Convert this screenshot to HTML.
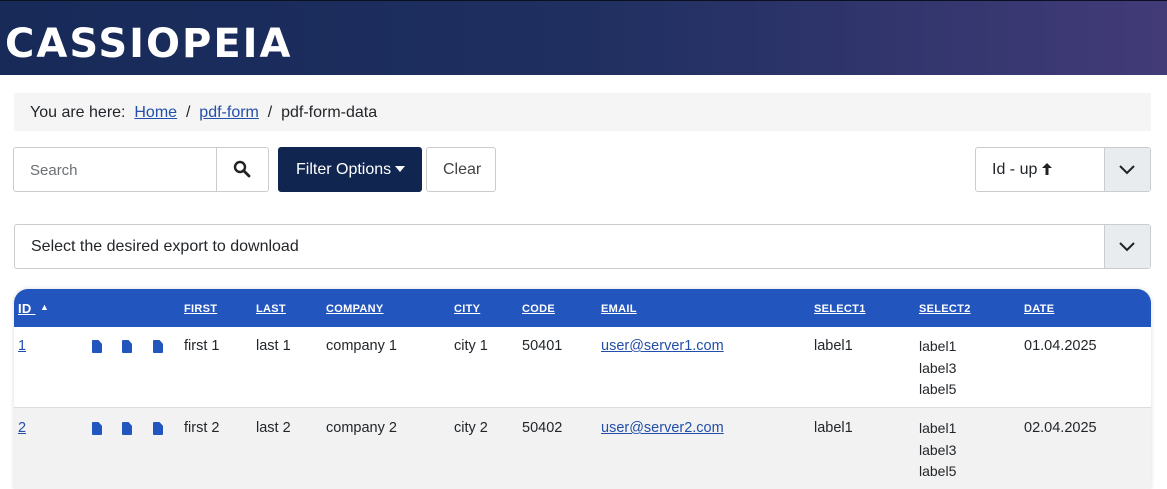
<!DOCTYPE html>
<html><head><style>
*{box-sizing:border-box;margin:0;padding:0}
body{width:1167px;height:485px;overflow:hidden;background:#fff;font-family:"Liberation Sans",sans-serif;color:#22262a;position:relative}
.hdr{position:absolute;left:0;top:0;width:1167px;height:75px;background:linear-gradient(90deg,#172a58 0%,#1f2f60 50%,#423b78 100%);border-top:1px solid #0b1020}
.logo{position:absolute;left:5px;top:20px;color:#fff;font-size:40px;font-weight:bold;letter-spacing:2px;font-family:"DejaVu Sans","Liberation Sans",sans-serif}
.bc{position:absolute;left:14px;top:93px;width:1137px;height:38px;background:#f5f5f5;font-size:16px;padding:11px 16px;color:#22262a}
.bc a{color:#224faa;text-decoration:underline}
.box{position:absolute;border:1px solid #ccc;background:#fff;border-radius:3px;font-size:16px;white-space:nowrap}
.tbl{position:absolute;left:14px;top:289px;width:1137px;height:200px;border-radius:14px 14px 0 0;overflow:hidden;box-shadow:0 0 4px rgba(0,0,0,.15)}
.th{height:38px;background:#2355be}
.th span{position:absolute;top:14px;color:#fff;font-size:11px;font-weight:bold;text-decoration:underline;letter-spacing:.3px}
.r{position:absolute;left:0;width:1137px;font-size:14.5px}
.r span{position:absolute}
.r a{color:#224faa;text-decoration:underline}
.ic{position:absolute;width:10px;height:13px;background:#2355be;clip-path:polygon(0 0,65% 0,100% 30%,100% 100%,0 100%);border-radius:1px}
</style></head><body>
<div class="hdr"><div class="logo">CASSIOPEIA</div></div>
<div class="bc">You are here:&nbsp; <a>Home</a> &nbsp;/&nbsp; <a>pdf-form</a> &nbsp;/&nbsp; pdf-form-data</div>
<div class="box" style="left:13px;top:147px;width:205px;height:45px;border-radius:3px 0 0 3px;color:#6b6f74;padding:14px 16px;font-size:15px">Search</div>
<div class="box" style="left:216px;top:147px;width:53px;height:45px;border-radius:0 3px 3px 0">
<svg width="18" height="18" viewBox="0 0 18 18" style="position:absolute;left:16px;top:12px"><circle cx="7" cy="7" r="5" stroke="#222" stroke-width="2.4" fill="none"/><line x1="10.5" y1="10.5" x2="16" y2="16" stroke="#222" stroke-width="2.8" stroke-linecap="round"/></svg></div>
<div class="box" style="left:278px;top:147px;width:144px;height:45px;background:#112551;border-color:#112551;color:#fff;padding:13px 17px">Filter Options<svg width="10" height="6" viewBox="0 0 10 6" style="margin-left:4px;vertical-align:2px"><path d="M0 0h10L5 6z" fill="#fff"/></svg></div>
<div class="box" style="left:426px;top:147px;width:70px;height:45px;color:#444;padding:13px 16px">Clear</div>
<div class="box" style="left:975px;top:147px;width:176px;height:45px;padding:13px 16px">Id - up <svg width="10" height="12" viewBox="0 0 10 12" style="vertical-align:-1px"><path d="M5 0L0 5h3.5v7h3V5H10z" fill="#222"/></svg>
<div style="position:absolute;right:0;top:0;width:46px;height:43px;background:#e9ecef;border-left:1px solid #ccc"><svg width="16" height="10" viewBox="0 0 16 10" style="position:absolute;left:14px;top:17px"><path d="M1 1l7 7 7-7" stroke="#222" stroke-width="2" fill="none"/></svg></div></div>
<div class="box" style="left:14px;top:224px;width:1137px;height:45px;padding:13px 16px">Select the desired export to download
<div style="position:absolute;right:0;top:0;width:46px;height:43px;background:#e9ecef;border-left:1px solid #ccc"><svg width="16" height="10" viewBox="0 0 16 10" style="position:absolute;left:14px;top:17px"><path d="M1 1l7 7 7-7" stroke="#222" stroke-width="2" fill="none"/></svg></div></div>
<div class="tbl">
<div class="th" style="position:relative">
<span style="left:4px;font-size:13px;top:12px">ID&nbsp;</span><span style="left:26px;text-decoration:none;font-size:9px;top:13px">&#9650;</span>
<span style="left:170px">FIRST</span><span style="left:242px">LAST</span><span style="left:312px">COMPANY</span><span style="left:440px">CITY</span><span style="left:508px">CODE</span><span style="left:587px">EMAIL</span><span style="left:800px">SELECT1</span><span style="left:905px">SELECT2</span><span style="left:1010px">DATE</span></div>
<div class="r" style="top:38px;height:81px;background:#fff;border-bottom:1px solid #ddd">
<span style="left:4px;top:11px"><a>1</a></span><i class="ic" style="left:78px;top:13px"></i><i class="ic" style="left:108px;top:13px"></i><i class="ic" style="left:139px;top:13px"></i>
<span style="left:170px;top:11px">first 1</span><span style="left:242px;top:11px">last 1</span><span style="left:312px;top:11px">company 1</span><span style="left:440px;top:11px">city 1</span><span style="left:508px;top:11px">50401</span><span style="left:587px;top:11px"><a>user@server1.com</a></span><span style="left:800px;top:11px">label1</span><span style="left:905px;top:9px;line-height:21.5px;font-size:14px">label1<br>label3<br>label5</span><span style="left:1010px;top:11px">01.04.2025</span></div>
<div class="r" style="top:119px;height:90px;background:#f2f2f2">
<span style="left:4px;top:12px"><a>2</a></span><i class="ic" style="left:78px;top:14px"></i><i class="ic" style="left:108px;top:14px"></i><i class="ic" style="left:139px;top:14px"></i>
<span style="left:170px;top:12px">first 2</span><span style="left:242px;top:12px">last 2</span><span style="left:312px;top:12px">company 2</span><span style="left:440px;top:12px">city 2</span><span style="left:508px;top:12px">50402</span><span style="left:587px;top:12px"><a>user@server2.com</a></span><span style="left:800px;top:12px">label1</span><span style="left:905px;top:10px;line-height:21.5px;font-size:14px">label1<br>label3<br>label5</span><span style="left:1010px;top:12px">02.04.2025</span></div>
</div>
</body></html>
